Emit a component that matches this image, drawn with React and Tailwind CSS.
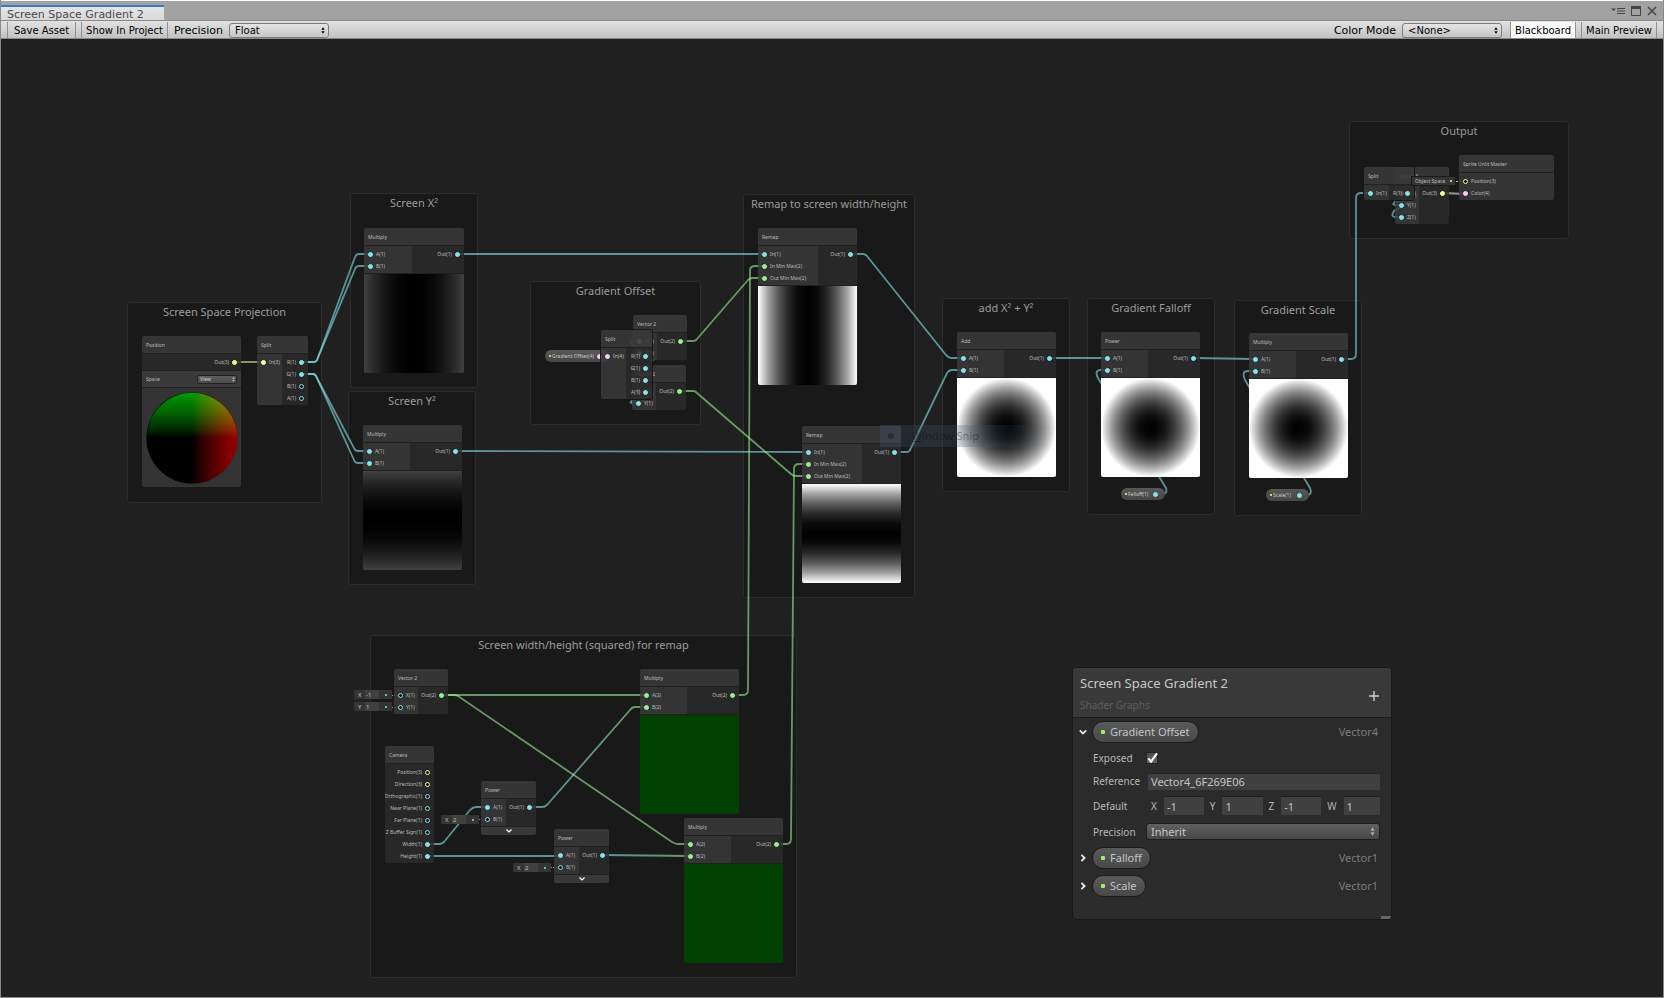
import React from "react";

/* Graph coordinates are measured from the window's top; the canvas starts under the toolbar. */
const CANVAS_TOP = 39;
const at = (x, y, w, h) => ({ left: x, top: y - CANVAS_TOP, width: w, height: h });

const DOTS = {
  cyan: "bg-[#84e4e7] border-[#84e4e7]",
  green: "bg-[#9aef92] border-[#9aef92]",
  yellow: "bg-[#f6ff9a] border-[#f6ff9a]",
  pink: "bg-[#fbcbf4] border-[#fbcbf4]",
};
const RINGS = {
  cyan: "border-[#84e4e7] bg-[#151515]",
  yellow: "border-[#f6ff9a] bg-[#151515]",
};

const GROUPS = [
  { title: "Screen Space Projection", x: 127, y: 302, w: 195, h: 201 },
  { title: "Screen X²", x: 350, y: 193, w: 128, h: 195 },
  { title: "Screen Y²", x: 348, y: 391, w: 128, h: 194 },
  { title: "Gradient Offset", x: 530, y: 281, w: 171, h: 144 },
  { title: "Remap to screen width/height", x: 743, y: 194, w: 172, h: 404 },
  { title: "add X² + Y²", x: 942, y: 298, w: 128, h: 194 },
  { title: "Gradient Falloff", x: 1087, y: 298, w: 128, h: 217 },
  { title: "Gradient Scale", x: 1234, y: 300, w: 128, h: 216 },
  { title: "Output", x: 1349, y: 121, w: 220, h: 118 },
  { title: "Screen width/height (squared) for remap", x: 370, y: 635, w: 427, h: 343 },
];

const c = (label, hollow) => ({ label, color: "cyan", hollow });
const g = (label) => ({ label, color: "green" });
const yl = (label, hollow) => ({ label, color: "yellow", hollow });
const pk = (label) => ({ label, color: "pink" });

const NODES = [
  { id: "pos", title: "Position", x: 142, y: 336, w: 99, ins: [], outs: [yl("Out(3)")], space: true, preview: "sphere" },
  { id: "split1", title: "Split", x: 257, y: 336, w: 51, inW: 25, ins: [yl("In(3)")], outs: [c("R(1)"), c("G(1)"), c("B(1)", true), c("A(1)", true)] },
  { id: "mx", title: "Multiply", x: 364, y: 228, w: 100, inW: 48, ins: [c("A(1)"), c("B(1)")], outs: [c("Out(1)")], preview: "x" },
  { id: "my", title: "Multiply", x: 363, y: 425, w: 99, inW: 47, ins: [c("A(1)"), c("B(1)")], outs: [c("Out(1)")], preview: "y" },
  { id: "v2a", title: "Vector 2", x: 633, y: 315, w: 54, inW: 24, ins: [c("X(1)"), c("Y(1)")], outs: [g("Out(2)")] },
  { id: "v2b", title: "Vector 2", x: 632, y: 365, w: 54, inW: 24, ins: [c("X(1)"), c("Y(1)")], outs: [g("Out(2)")] },
  { id: "split2", title: "Split", x: 601, y: 330, w: 51, inW: 25, ins: [pk("In(4)")], outs: [c("R(1)"), c("G(1)"), c("B(1)"), c("A(1)")], over: true },
  { id: "remap1", title: "Remap", x: 758, y: 228, w: 99, inW: 60, ins: [c("In(1)"), g("In Min Max(2)"), g("Out Min Max(2)")], outs: [c("Out(1)")], preview: "rx" },
  { id: "remap2", title: "Remap", x: 802, y: 426, w: 99, inW: 60, ins: [c("In(1)"), g("In Min Max(2)"), g("Out Min Max(2)")], outs: [c("Out(1)")], preview: "ry" },
  { id: "add", title: "Add", x: 957, y: 332, w: 99, inW: 47, ins: [c("A(1)"), c("B(1)")], outs: [c("Out(1)")], preview: "radial" },
  { id: "pow", title: "Power", x: 1101, y: 332, w: 99, inW: 47, ins: [c("A(1)"), c("B(1)")], outs: [c("Out(1)")], preview: "radial" },
  { id: "scale", title: "Multiply", x: 1249, y: 333, w: 99, inW: 47, ins: [c("A(1)"), c("B(1)")], outs: [c("Out(1)")], preview: "radial" },
  { id: "v3", title: "Vector 3", x: 1395, y: 167, w: 54, inW: 24, ins: [c("X(1)"), c("Y(1)"), c("Z(1)")], outs: [yl("Out(3)")] },
  { id: "split3", title: "Split", x: 1364, y: 167, w: 50, inW: 25, ins: [c("In(1)")], outs: [c("R(1)")], over: true },
  { id: "master", title: "Sprite Unlit Master", x: 1459, y: 155, w: 95, inW: 95, ins: [yl("Position(3)", true), pk("Color(4)")], outs: [] },
  { id: "v2c", title: "Vector 2", x: 394, y: 669, w: 54, inW: 24, ins: [c("X(1)", true), c("Y(1)", true)], outs: [g("Out(2)")] },
  {
    id: "camera", title: "Camera", x: 385, y: 746, w: 49, ins: [],
    outs: [yl("Position(3)", true), yl("Direction(3)", true), c("Orthographic(1)", true), c("Near Plane(1)", true), c("Far Plane(1)", true), c("Z Buffer Sign(1)", true), c("Width(1)"), c("Height(1)")],
  },
  { id: "p1", title: "Power", x: 481, y: 781, w: 55, inW: 25, ins: [c("A(1)"), c("B(1)", true)], outs: [c("Out(1)")], chevron: true },
  { id: "p2", title: "Power", x: 554, y: 829, w: 55, inW: 25, ins: [c("A(1)"), c("B(1)", true)], outs: [c("Out(1)")], chevron: true },
  { id: "m1", title: "Multiply", x: 640, y: 669, w: 99, inW: 47, ins: [g("A(2)"), g("B(2)")], outs: [g("Out(2)")], preview: "green" },
  { id: "m2", title: "Multiply", x: 684, y: 818, w: 99, inW: 47, ins: [g("A(2)"), g("B(2)")], outs: [g("Out(2)")], preview: "green" },
];

const EDGES = [
  ["yellow", "M235 362H263"],
  ["cyan", "M302 362H314Q316 362 317 360L355 257Q356 254 359 254H370"],
  ["cyan", "M302 362H314Q316 362 317 360L355 269Q356 266 359 266H370"],
  ["cyan", "M302 374H313Q315 374 316 376L354 448Q355 451 358 451H369"],
  ["cyan", "M302 374H313Q315 374 316 376L354 460Q355 463 358 463H369"],
  ["cyan", "M458 254L764 254"],
  ["cyan", "M456 451L808 452"],
  ["green", "M681 341H694Q695 341 697 339L748 280Q750 278 753 278H764"],
  ["green", "M680 391H694Q695 391 697 393L791 474Q793 476 796 476H808"],
  ["cyan", "M851 254H863Q865 254 867 256L946 355Q949 358 951 358H963"],
  ["cyan", "M895 452H907Q909 452 910 450L947 373Q949 370 952 370H963"],
  ["cyan", "M1050 358H1107"],
  ["cyan", "M1194 358L1255 359"],
  ["cyan", "M1342 359H1351Q1356 359 1356 354V198Q1356 193 1361 193H1370"],
  ["cyan", "M1156 494H1162Q1168 494 1166 488L1098 378Q1094 370 1101 370H1107"],
  ["cyan", "M1300 495H1306Q1313 495 1310 488L1245 380Q1241 371 1248 371H1255"],
  ["cyan", "M646 392Q656 392 652 396L633 400Q628 403 633 403H638"],
  ["cyan", "M646 356Q656 358 652 361L633 345Q628 341 633 341H638"],
  ["cyan", "M1408 193Q1420 194 1414 199L1395 202Q1391 205 1396 205H1401"],
  ["cyan", "M1408 193Q1420 194 1414 199L1394 211Q1390 217 1396 217H1401"],
  ["mixC", "M1443 193L1465 194"],
  ["green", "M442 695L646 695"],
  ["green", "M442 695H454Q456 695 458 696L672 842Q675 844 678 844H690"],
  ["cyan", "M428 844H439Q442 844 444 842L470 810Q473 807 476 807H487"],
  ["cyan", "M428 856H560"],
  ["mixA", "M530 807H542Q545 807 547 805L630 710Q632 707 635 707H646"],
  ["mixB", "M603 855L690 856"],
  ["green", "M733 695H743Q748 695 748 690L750 271Q750 266 755 266H764"],
  ["green", "M777 844H786Q791 844 791 839L794 469Q794 464 799 464H808"],
];
const STROKES = {
  cyan: "#84e4e7",
  green: "#9aef92",
  yellow: "#f6ff9a",
  mixA: "url(#mixA)",
  mixB: "url(#mixB)",
  mixC: "url(#mixC)",
};

const PREVIEWS = {
  x: "bg-[linear-gradient(to_right,#404040,#292929_10%,#171717_20%,#0a0a0a_30%,#020202_40%,#000_50%,#020202_60%,#0a0a0a_70%,#171717_80%,#292929_90%,#404040)]",
  y: "bg-[linear-gradient(to_bottom,#404040,#292929_10%,#171717_20%,#0a0a0a_30%,#020202_40%,#000_50%,#020202_60%,#0a0a0a_70%,#171717_80%,#292929_90%,#404040)]",
  rx: "bg-[linear-gradient(to_right,#fff,#a3a3a3_10%,#5c5c5c_20%,#292929_30%,#0a0a0a_40%,#000_50%,#0a0a0a_60%,#292929_70%,#5c5c5c_80%,#a3a3a3_90%,#fff)]",
  ry: "bg-[linear-gradient(to_bottom,#fff,#a3a3a3_10%,#5c5c5c_20%,#292929_30%,#0a0a0a_40%,#000_50%,#0a0a0a_60%,#292929_70%,#5c5c5c_80%,#a3a3a3_90%,#fff)]",
  radial: "bg-[radial-gradient(closest-side,#000,#030303_10%,#0a0a0a_20%,#171717_30%,#292929_40%,#404040_50%,#5c5c5c_60%,#7d7d7d_70%,#a3a3a3_80%,#cfcfcf_90%,#fff)]",
  green: "bg-[#004000]",
};

function Dot({ color, hollow }) {
  return (
    <span
      className={`block size-[5px] shrink-0 rounded-full border ${hollow ? RINGS[color] : DOTS[color]}`}
    />
  );
}

function Port({ port, out }) {
  return (
    <li className={`flex h-[12px] items-center gap-[3px] px-[4px] ${out ? "flex-row-reverse" : ""}`}>
      <Dot color={port.color} hollow={port.hollow} />
      <span className="whitespace-nowrap">{port.label}</span>
    </li>
  );
}

function UpDown({ className }) {
  return (
    <svg viewBox="0 0 6 10" className={className} aria-hidden="true">
      <path d="M3 0L5.6 4H0.4ZM3 10L0.4 6H5.6Z" fill="currentColor" />
    </svg>
  );
}

function Sphere() {
  return (
    <div className="flex h-[99px] items-center justify-center bg-[#333]">
      <svg viewBox="0 0 92 92" className="size-[92px] isolate" aria-hidden="true">
        <defs>
          <linearGradient id="sphereR" x1="0" x2="1" y1="0" y2="0">
            <stop offset="0.5" stopColor="#000" />
            <stop offset="0.6" stopColor="#2a0000" />
            <stop offset="0.8" stopColor="#680000" />
            <stop offset="1" stopColor="#9a0000" />
          </linearGradient>
          <linearGradient id="sphereG" x1="0" x2="0" y1="1" y2="0">
            <stop offset="0.5" stopColor="#000" />
            <stop offset="0.6" stopColor="#002a00" />
            <stop offset="0.8" stopColor="#006800" />
            <stop offset="1" stopColor="#009a00" />
          </linearGradient>
        </defs>
        <circle cx="46" cy="46" r="45.6" fill="url(#sphereR)" />
        <circle cx="46" cy="46" r="45.2" fill="url(#sphereG)" className="mix-blend-screen" />
      </svg>
    </div>
  );
}

function Node({ node }) {
  const line = "border-[#202020]";
  return (
    <section
      style={at(node.x, node.y, node.w)}
      className={`absolute overflow-hidden rounded-[2px] text-[5px] leading-[8px] text-[#bcbcbc] ${node.over ? "shadow-[0_0_0_1px_#181818]" : ""}`}
    >
      <h3 className={`flex h-[18px] items-center border-b bg-[#393939]/90 px-[4px] ${line}`}>{node.title}</h3>
      <div className="flex">
        {node.ins.length > 0 && (
          <ul style={{ width: node.inW }} className="shrink-0 bg-[#393939]/85 pt-[2px] pb-px">
            {node.ins.map((p) => (
              <Port key={p.label} port={p} />
            ))}
          </ul>
        )}
        {node.outs.length > 0 && (
          <ul className={`min-w-0 flex-1 bg-[#2b2b2b]/85 pt-[2px] ${node.space ? "pb-[2px]" : "pb-px"}`}>
            {node.outs.map((p) => (
              <Port key={p.label} port={p} out />
            ))}
          </ul>
        )}
      </div>
      {node.space && (
        <div className={`flex h-[18px] items-center justify-between border-y bg-[#393939] px-[4px] ${line}`}>
          <label htmlFor="space">Space</label>
          <span className="relative flex">
            <select
              id="space"
              className="h-[9px] w-[40px] appearance-none rounded-[2px] border border-[#222] bg-linear-to-b from-[#5e5e5e] to-[#484848] px-[2px] text-[5px] leading-[7px] text-[#d0d0d0]"
            >
              <option>View</option>
            </select>
            <UpDown className="pointer-events-none absolute top-[2px] right-[2px] h-[5px] w-[3px]" />
          </span>
        </div>
      )}
      {node.chevron && (
        <button type="button" aria-label="Expand preview" className={`flex h-[9px] w-full items-center justify-center border-t bg-[#393939] text-white ${line}`}>
          <svg viewBox="0 0 6 4" className="h-[4px] w-[6px]" aria-hidden="true">
            <path d="M0.5 0.5L3 3L5.5 0.5" fill="none" stroke="currentColor" strokeWidth="1.2" />
          </svg>
        </button>
      )}
      {node.preview === "sphere" && <Sphere />}
      {node.preview && node.preview !== "sphere" && (
        <div className={`border-t ${line}`}>
          <div className={`h-[99px] ${PREVIEWS[node.preview]}`} />
        </div>
      )}
    </section>
  );
}

function InlineInput({ x, y, axis, value }) {
  return (
    <label style={at(x, y, 38, 9)} className="absolute flex items-center bg-[#343434] pl-[4px] text-[6px] leading-[8px] text-[#c0c0c0]">
      <span className="w-[7px]">{axis}</span>
      <input defaultValue={value} className="h-[9px] w-[14px] bg-[#404040] px-[1px] text-[6px] leading-[8px]" />
      <span className="ml-[6px] size-[2px] rounded-full bg-[#84e4e7]" />
    </label>
  );
}

function Pill({ x, y, w, label, port }) {
  return (
    <div
      style={at(x, y, w, 12)}
      className="absolute flex items-center rounded-full bg-linear-to-b from-[#585858] to-[#464646] pr-[7px] pl-[4px] text-[5px] leading-[8px] text-[#c8c8c8]"
    >
      <span className="size-[2px] bg-[#9cf25e]" />
      <span className="ml-px whitespace-nowrap">{label}</span>
      <span className="ml-auto">
        <Dot color={port} />
      </span>
    </div>
  );
}

function Edges() {
  return (
    <svg className="absolute inset-0 size-full" aria-hidden="true">
      <defs>
        <linearGradient id="mixA" gradientUnits="userSpaceOnUse" x1="530" y1="0" x2="646" y2="0">
          <stop offset="0.3" stopColor="#84e4e7" />
          <stop offset="0.9" stopColor="#9aef92" />
        </linearGradient>
        <linearGradient id="mixB" gradientUnits="userSpaceOnUse" x1="603" y1="0" x2="690" y2="0">
          <stop offset="0.1" stopColor="#84e4e7" />
          <stop offset="0.9" stopColor="#9aef92" />
        </linearGradient>
        <linearGradient id="mixC" gradientUnits="userSpaceOnUse" x1="1449" y1="0" x2="1460" y2="0">
          <stop offset="0" stopColor="#f6ff9a" />
          <stop offset="1" stopColor="#fbcbf4" />
        </linearGradient>
      </defs>
      <g transform={`translate(0 ${-CANVAS_TOP})`} fill="none" strokeWidth="1.8" strokeOpacity="0.6">
        {EDGES.map(([color, d]) => (
          <path key={d} d={d} stroke={STROKES[color]} />
        ))}
      </g>
      <g transform={`translate(0 ${-CANVAS_TOP})`} strokeOpacity="0.7" strokeDasharray="2 1">
        <path d="M388 695.5H398M388 707.5H398M475 819.5H485M547 867.5H558" stroke="#84e4e7" />
        <path d="M1453 181.5H1463" stroke="#f6ff9a" />
      </g>
    </svg>
  );
}

function Chevron({ open }) {
  return (
    <svg viewBox="0 0 8 8" className="size-[8px]" aria-hidden="true">
      <path d={open ? "M0.8 2.4L4 5.6L7.2 2.4" : "M2.4 0.8L5.6 4L2.4 7.2"} fill="none" stroke="currentColor" strokeWidth="1.8" />
    </svg>
  );
}

function Property({ name, type, open }) {
  return (
    <div className="flex h-[28px] items-center pr-[13px] pl-[6px]">
      <button type="button" aria-label={`Toggle ${name}`} aria-expanded={!!open} className="mr-[5px] text-[#e8e8e8]">
        <Chevron open={open} />
      </button>
      <span className="flex h-[22px] items-center gap-[5px] rounded-full border border-[#1b1b1b] bg-linear-to-b from-[#5a5a5a] to-[#484848] px-[8px] text-[11px] leading-[16px] text-[#c4c4c4]">
        <span className="size-[4px] rounded-[1px] bg-[#9cf25e]" />
        {name}
      </span>
      <span className="ml-auto text-[11px] leading-[16px] text-[#7c7c7c]">{type}</span>
    </div>
  );
}

const FIELD = "min-w-0 border-t border-[#202020] bg-[#404040] px-[3px] text-[11px] leading-[14px] text-[#c4c4c4]";

function Blackboard() {
  return (
    <aside
      style={at(1072, 667, 320)}
      className="absolute flex flex-col overflow-hidden rounded-[4px] border border-[#191919] bg-[#2b2b2b] text-[10px] leading-[14px] text-[#b8b8b8]"
    >
      <header className="flex h-[50px] items-center justify-between border-b border-[#1c1c1c] bg-[#393939] pr-[12px] pl-[7px]">
        <div className="flex flex-col gap-[6px]">
          <h1 className="text-[13px] leading-[18px] text-[#c8c8c8]">Screen Space Gradient 2</h1>
          <p className="text-[#5e5e5e]">Shader Graphs</p>
        </div>
        <button type="button" aria-label="Add property" className="mt-[6px] text-[#d0d0d0]">
          <svg viewBox="0 0 10 10" className="size-[10px]" aria-hidden="true">
            <path d="M5 0V10M0 5H10" stroke="currentColor" strokeWidth="1.4" />
          </svg>
        </button>
      </header>
      <Property name="Gradient Offset" type="Vector4" open />
      <div className="flex flex-col pr-[11px] pl-[20px]">
        <div className="flex h-[24px] items-center">
          <label htmlFor="exposed" className="w-[53px]">Exposed</label>
          <span className="relative flex">
            <input id="exposed" type="checkbox" defaultChecked className="size-[12px] appearance-none rounded-[1px] border border-[#222] bg-linear-to-b from-[#4c4c4c] to-[#666]" />
            <svg viewBox="0 0 12 12" className="pointer-events-none absolute inset-0 size-[12px]" aria-hidden="true">
              <path d="M2.4 6.4L5 9.6L11 1.4" fill="none" stroke="#fff" strokeWidth="2.1" />
            </svg>
          </span>
        </div>
        <div className="flex h-[22px] items-center">
          <label htmlFor="reference" className="w-[55px]">Reference</label>
          <input id="reference" defaultValue="Vector4_6F269E06" className={`h-[17px] flex-1 ${FIELD}`} />
        </div>
        <div role="group" aria-label="Default" className="flex h-[27px] items-center">
          <span className="w-[58px]">Default</span>
          <div className="flex flex-1 gap-[6px]">
            {[["X", "-1"], ["Y", "1"], ["Z", "-1"], ["W", "1"]].map(([axis, value]) => (
              <label key={axis} className="flex min-w-0 flex-1 items-center gap-[7px]">
                {axis}
                <input defaultValue={value} className={`h-[19px] w-0 flex-1 ${FIELD}`} />
              </label>
            ))}
          </div>
        </div>
        <div className="flex h-[25px] items-center">
          <label htmlFor="precision" className="w-[53px]">Precision</label>
          <span className="relative flex flex-1">
            <select
              id="precision"
              className="h-[17px] w-full appearance-none rounded-[3px] border border-[#1d1d1d] bg-linear-to-b from-[#616161] to-[#474747] px-[4px] text-[11px] leading-[14px] text-[#c8c8c8]"
            >
              <option>Inherit</option>
            </select>
            <UpDown className="pointer-events-none absolute top-[4px] right-[5px] h-[9px] w-[5px] text-[#aaa]" />
          </span>
        </div>
      </div>
      <Property name="Falloff" type="Vector1" />
      <Property name="Scale" type="Vector1" />
      <div className="flex h-[19px] items-end justify-end">
        <span className="h-[3px] w-[10px] bg-[#666]" />
      </div>
    </aside>
  );
}

function ToolbarSelect({ id, label, option, width }) {
  return (
    <span className="flex items-center">
      <label htmlFor={id} className="px-[6px] pt-[2px] text-[11px]">{label}</label>
      <span className="relative flex">
        <select
          id={id}
          className={`h-[15px] appearance-none rounded-[3px] border border-[#7c7c7c] bg-linear-to-b from-[#e4e4e4] to-[#c6c6c6] px-[5px] pt-px text-[10px] leading-[12px] text-black ${width}`}
        >
          <option>{option}</option>
        </select>
        <UpDown className="pointer-events-none absolute top-[4px] right-[4px] h-[7px] w-[4px]" />
      </span>
    </span>
  );
}

function TopBar() {
  return (
    <header className="font-['DejaVu_Sans',sans-serif] text-[10px] leading-[14px] text-black">
      <div className="flex h-[20px] items-end justify-between border-t border-white bg-[#a2a2a2] pr-[6px]">
        <div className="flex h-[15px] items-center border-t-2 border-[#3c78c8] bg-linear-to-b from-[#e4e4e4] to-[#d9d9d9] pt-[2px] pr-[20px] pl-[6px] text-[11px] text-[#4a4a4a]">
          <h2>Screen Space Gradient 2</h2>
        </div>
        <div className="flex h-full items-center gap-[6px] text-[#454545]">
          <button type="button" aria-label="Tab menu">
            <svg viewBox="0 0 14 8" className="h-[8px] w-[14px]" aria-hidden="true">
              <path d="M0 1.5H5L2.5 4Z" fill="currentColor" />
              <path d="M6 1.5H14M6 4H14M6 6.5H14" stroke="currentColor" />
            </svg>
          </button>
          <button type="button" aria-label="Maximize">
            <svg viewBox="0 0 10 10" className="size-[10px]" aria-hidden="true">
              <path d="M0.5 0.5H9.5V9.5H0.5Z" fill="none" stroke="currentColor" />
              <path d="M0 1.5H10" stroke="currentColor" strokeWidth="3" />
            </svg>
          </button>
          <button type="button" aria-label="Close">
            <svg viewBox="0 0 10 10" className="size-[10px]" aria-hidden="true">
              <path d="M1 1L9 9M9 1L1 9" stroke="currentColor" strokeWidth="1.6" />
            </svg>
          </button>
        </div>
      </div>
      <div className="flex h-[19px] items-center justify-between border-t border-b border-t-[#8a8a8a] border-b-[#8a8a8a] bg-linear-to-b from-[#e2e2e2] to-[#c2c2c2] px-[6px] pt-px">
        <div className="flex h-full items-center">
          <button type="button" className="mr-[5px] h-full border-x border-[#909090] px-[6px] pt-[2px]">Save Asset</button>
          <button type="button" className="h-full border-x border-[#909090] px-[4px] pt-[2px]">Show In Project</button>
          <ToolbarSelect id="tb-precision" label="Precision" option="Float" width="w-[100px]" />
        </div>
        <div className="flex h-full items-center">
          <ToolbarSelect id="tb-color" label="Color Mode" option="<None>" width="w-[100px]" />
          <button type="button" aria-pressed="true" className="mr-[5px] ml-[8px] h-full border-x border-[#909090] bg-[#fafafa] px-[4px] pt-[2px]">Blackboard</button>
          <button type="button" className="h-full border-x border-[#909090] px-[4px] pt-[2px]">Main Preview</button>
        </div>
      </div>
    </header>
  );
}

export default function App() {
  return (
    <div className="flex h-screen flex-col overflow-hidden border-x border-b border-[#8a8a8a] bg-[#202020] font-['Noto_Sans',sans-serif]">
      <TopBar />
      <main className="relative -ml-px flex-1 overflow-hidden">
        {GROUPS.map((group) => (
          <section
            key={group.title}
            style={at(group.x, group.y, group.w, group.h)}
            className="absolute rounded-[3px] border border-[#2c2c2c] bg-[#191919] pt-px text-center text-[11px] leading-[16px] whitespace-nowrap text-[#9c9c9c]"
          >
            <h2>{group.title}</h2>
          </section>
        ))}
        <Edges />
        <Pill x={545} y={350} w={64} label="Gradient Offset(4)" port="pink" />
        <Pill x={1121} y={488} w={44} label="Falloff(1)" port="cyan" />
        <Pill x={1266} y={489} w={43} label="Scale(1)" port="cyan" />
        {NODES.map((node) => (
          <Node key={node.id} node={node} />
        ))}
        <InlineInput x={354} y={690} axis="X" value="-1" />
        <InlineInput x={354} y={702} axis="Y" value="1" />
        <InlineInput x={441} y={815} axis="X" value="2" />
        <InlineInput x={513} y={863} axis="X" value="2" />
        <div
          style={at(1411, 176, 45, 10)}
          className="absolute flex items-center justify-between border border-[#1a1a1a] bg-[#343434] px-[3px] text-[5px] leading-[8px] text-[#c0c0c0]"
        >
          Object Space
          <span className="size-[2px] rounded-full bg-[#f6ff9a]" />
        </div>
        <div
          style={at(880, 425, 174, 22)}
          className="absolute flex items-center bg-linear-to-r from-[#40586a]/25 from-60% to-transparent text-[11px] leading-[16px] text-black/35"
        >
          <span className="flex h-full w-[21px] items-center justify-center bg-[#406080]/15">
            <span className="size-[6px] rounded-full bg-[#202020]/60" />
          </span>
          <span className="ml-[11px] whitespace-nowrap">
            <u>W</u>indow Snip
          </span>
        </div>
        <Blackboard />
        <span className="absolute bottom-0 left-0 h-[9px] w-px bg-[#c02020]" />
      </main>
    </div>
  );
}
